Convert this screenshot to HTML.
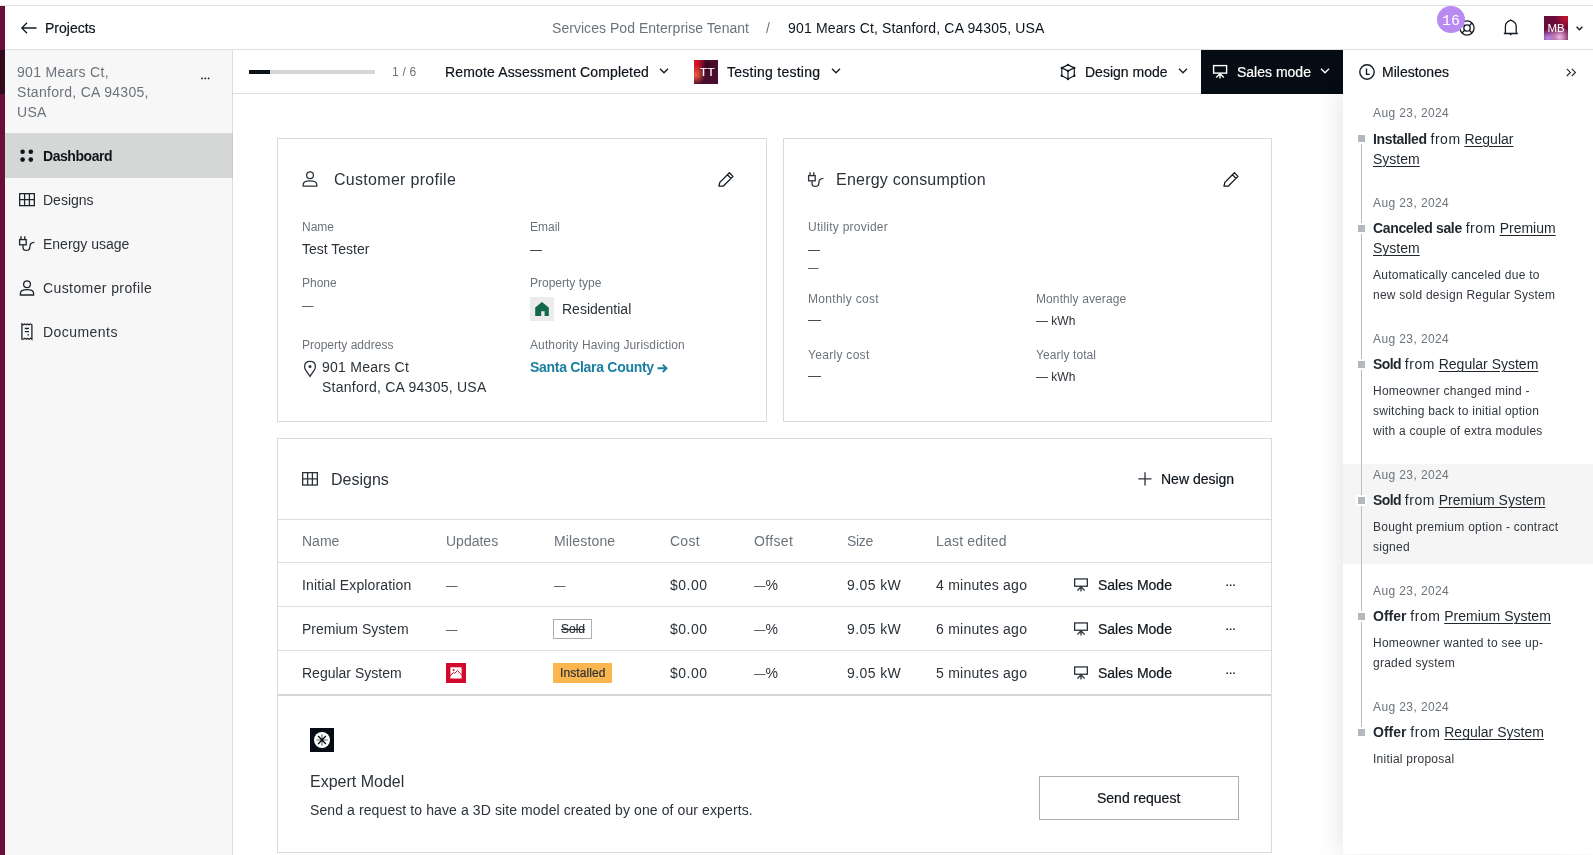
<!DOCTYPE html>
<html><head><meta charset="utf-8">
<style>
*{box-sizing:border-box;margin:0;padding:0}
html,body{width:1593px;height:855px;overflow:hidden;background:#fff}
body{font-family:"Liberation Sans",sans-serif;color:#141b22;position:relative;will-change:transform}
.a{position:absolute;white-space:nowrap}
.t14{font-size:14px;line-height:20px}
.t16{font-size:16px;line-height:22px}
.t12{font-size:12px;line-height:16px}
.g{color:#6c737b}
.d{color:#0d141b}
.b{color:#2b3239}
.m{-webkit-text-stroke:0.2px currentColor}
.bd{font-weight:bold}
svg{position:absolute;overflow:visible}
.ln{position:absolute;background:#dcdddf}
u{text-decoration:underline;text-underline-offset:2px;text-decoration-thickness:1px}
.a b{font-weight:bold;letter-spacing:-0.45px}
</style></head><body>
<!-- top line -->
<div class="ln" style="left:0;top:5px;width:1593px;height:1px;background:#e1e2e3"></div>
<!-- left strip -->
<div class="a" style="left:0;top:6px;width:5px;height:849px;background:#6a0e3b"></div>
<div class="a" style="left:0;top:50px;width:5px;height:44px;background:#340a1d"></div>

<!-- ============ HEADER ============ -->
<div class="ln" style="left:5px;top:49px;width:1588px;height:1px"></div>
<svg style="left:21px;top:22px" width="16" height="12" viewBox="0 0 16 12"><path d="M6 0.8 L0.8 6 L6 11.2 M0.8 6 H15.5" fill="none" stroke="#141b22" stroke-width="1.3"/></svg>
<div class="a t14 d m" style="left:45px;top:18px">Projects</div>
<div class="a t14 g" style="left:552px;top:18px;letter-spacing:0.04px">Services Pod Enterprise Tenant</div>
<div class="a t14 g" style="left:766px;top:18px">/</div>
<div class="a t14 d" style="left:788px;top:18px;letter-spacing:0.16px">901 Mears Ct, Stanford, CA 94305, USA</div>
<!-- right icons -->
<svg style="left:1459px;top:20px" width="16" height="16" viewBox="0 0 16 16"><g fill="none" stroke="#141b22" stroke-width="1.3"><circle cx="8" cy="8" r="7.1"/><circle cx="8" cy="8" r="3.2"/><path d="M3 3 L5.7 5.7 M13 3 L10.3 5.7 M3 13 L5.7 10.3 M13 13 L10.3 10.3"/></g></svg>
<div class="a" style="left:1437px;top:6px;width:28px;height:27px;border-radius:50%;background:#b98bf1"></div>
<div class="a" style="left:1441px;top:12.5px;width:20px;font-family:'Liberation Mono',monospace;font-size:15px;line-height:18px;color:#fff;text-align:center">16</div>
<svg style="left:1503px;top:19px" width="16" height="17" viewBox="0 0 16 17"><path d="M2.4 14.3 V7.2 Q2.4 3.2 7.7 1.2 Q13.2 3.2 13.2 7.2 V14.3 M0.8 14.5 H14.8" fill="none" stroke="#141b22" stroke-width="1.3" stroke-linejoin="round"/><path d="M6.4 15 H9 L7.7 16.6 Z M6.9 1.6 L7.7 0.4 L8.5 1.6 Z" fill="#141b22"/></svg>
<div class="a" style="left:1544px;top:16px;width:24px;height:24px;background:radial-gradient(ellipse 12px 11px at 65% 88%,#f6bdf0 0%,rgba(246,189,240,0) 100%),radial-gradient(ellipse 10px 9px at 15% 92%,#b48cf4 0%,rgba(180,140,244,0) 100%),radial-gradient(ellipse 11px 11px at 90% 8%,#c2122c 0%,rgba(194,18,44,0) 100%),#680d3a"></div>
<div class="a" style="left:1544px;top:21px;width:24px;text-align:center;color:#fff;font-size:11.5px;line-height:14px">MB</div>
<svg style="left:1576px;top:26px" width="7" height="5" viewBox="0 0 7 5"><path d="M0.6 0.8 L3.5 3.7 L6.4 0.8" fill="none" stroke="#141b22" stroke-width="1.4"/></svg>

<!-- ============ SIDEBAR ============ -->
<div class="a" style="left:5px;top:50px;width:227px;height:805px;background:#f7f7f7"></div>
<div class="ln" style="left:232px;top:50px;width:1px;height:805px"></div>
<div class="a t14 g" style="left:17px;top:62px;line-height:20px;letter-spacing:0.3px">901 Mears Ct,<br>Stanford, CA 94305,<br>USA</div>
<svg style="left:201px;top:77px" width="9" height="3" viewBox="0 0 9 3"><g fill="#141b22"><circle cx="1" cy="1.4" r="0.9"/><circle cx="4.3" cy="1.4" r="0.9"/><circle cx="7.6" cy="1.4" r="0.9"/></g></svg>
<div class="a" style="left:5px;top:133px;width:227px;height:45px;background:#d5d6d6"></div>
<div class="a" style="left:232px;top:133px;width:1px;height:45px;background:#c6c8ca"></div>
<svg style="left:20px;top:149px" width="14" height="14" viewBox="0 0 14 14"><g fill="#0d141b"><circle cx="2.6" cy="2.8" r="2.3"/><circle cx="10.8" cy="2.8" r="2.3"/><circle cx="2.6" cy="10.6" r="2.3"/><circle cx="10.8" cy="10.6" r="2.3"/></g></svg>
<div class="a t14 d bd" style="left:43px;top:146px;letter-spacing:-0.45px">Dashboard</div>
<svg style="left:19px;top:193px" width="16" height="14" viewBox="0 0 16 14"><g fill="none" stroke="#1d242b" stroke-width="1.3"><rect x="0.65" y="0.65" width="14.7" height="12"/><path d="M5.6 0.65 V12.65 M10.4 0.65 V12.65 M0.65 6.6 H15.35"/></g></svg>
<div class="a t14 b" style="left:43px;top:190px">Designs</div>
<svg style="left:17px;top:234px" width="20" height="20" viewBox="0 0 20 20"><g fill="none" stroke="#1d242b" stroke-width="1.3"><path d="M4 2.2 V5.4 M7.8 2.2 V5.4"/><rect x="2.6" y="5.6" width="6.6" height="5.2"/><path d="M6 11 V13.2 Q6 16.4 9.3 16.4 Q12.9 16.4 12.9 12.4 Q12.9 8.6 17.4 8.4"/></g></svg>
<div class="a t14 b" style="left:43px;top:234px">Energy usage</div>
<svg style="left:19px;top:280px" width="16" height="16" viewBox="0 0 16 16"><g fill="none" stroke="#1d242b" stroke-width="1.3"><circle cx="8" cy="4.2" r="3.4"/><path d="M1.4 15 V13.2 Q1.4 9.6 8 9.6 Q14.6 9.6 14.6 13.2 V15 Z"/></g></svg>
<div class="a t14 b" style="left:43px;top:278px;letter-spacing:0.4px">Customer profile</div>
<svg style="left:21px;top:323px" width="12" height="17" viewBox="0 0 12 17"><g fill="none" stroke="#1d242b" stroke-width="1.3"><path d="M0.9 16.2 V0.9 L2.3 1.8 L3.7 0.9 L5.1 1.8 L6.5 0.9 L7.9 1.8 L9.3 0.9 L10.9 1.8 V16.2 L9.5 15.3 L8.1 16.2 L6.7 15.3 L5.3 16.2 L3.9 15.3 L2.5 16.2 Z"/><path d="M3.8 5.5 H8 M3.8 8.7 H8 M6.5 11.9 H8"/></g></svg>
<div class="a t14 b" style="left:43px;top:322px;letter-spacing:0.45px">Documents</div>

<!-- ============ TOOLBAR ============ -->
<div class="ln" style="left:233px;top:93px;width:1110px;height:1px"></div>
<div class="a" style="left:249px;top:70px;width:126px;height:4px;background:#d5d6d7"></div>
<div class="a" style="left:249px;top:70px;width:21px;height:4px;background:#0b1219"></div>
<div class="a t12 g" style="left:392px;top:64px;letter-spacing:0.2px">1 / 6</div>
<div class="a t14 d m" style="left:445px;top:62px;letter-spacing:0.15px">Remote Assessment Completed</div>
<svg style="left:659px;top:68px" width="10" height="6" viewBox="0 0 10 6"><path d="M1 0.8 L5 4.8 L9 0.8" fill="none" stroke="#141b22" stroke-width="1.3"/></svg>
<div class="a" style="left:694px;top:60px;width:24px;height:24px;background:radial-gradient(ellipse 9px 10px at 2px 15px,#f2603f 0%,rgba(242,96,63,0) 100%),radial-gradient(ellipse 12px 16px at 0px 4px,#f01020 0%,#c0102a 40%,rgba(160,16,40,0) 100%),radial-gradient(ellipse 10px 8px at 12px 6px,#35051c 0%,rgba(53,5,28,0) 100%),#4b0d2f"></div>
<div class="a m" style="left:695.5px;top:65px;width:24px;text-align:center;color:#fff;font-size:11.5px;line-height:14px;letter-spacing:0.6px">TT</div>
<div class="a t14 d m" style="left:727px;top:62px;letter-spacing:0.25px">Testing testing</div>
<svg style="left:831px;top:68px" width="10" height="6" viewBox="0 0 10 6"><path d="M1 0.8 L5 4.8 L9 0.8" fill="none" stroke="#141b22" stroke-width="1.3"/></svg>
<svg style="left:1060px;top:64px" width="16" height="16" viewBox="0 0 16 16"><g fill="none" stroke="#141b22" stroke-width="1.2" stroke-linejoin="round"><path d="M8 0.9 L14.3 3.9 V11.8 L8 15 L1.8 11.8 V3.9 Z M1.8 3.9 L8 6.9 L14.3 3.9 M8 6.9 V15"/></g><g fill="#141b22"><circle cx="8" cy="0.9" r="1.2"/><circle cx="1.8" cy="3.9" r="1.2"/><circle cx="14.3" cy="3.9" r="1.2"/><circle cx="1.8" cy="11.8" r="1.2"/><circle cx="14.3" cy="11.8" r="1.2"/><circle cx="8" cy="15" r="1.2"/><circle cx="8" cy="6.9" r="1.2"/></g></svg>
<div class="a t14 d m" style="left:1085px;top:62px">Design mode</div>
<svg style="left:1178px;top:68px" width="10" height="6" viewBox="0 0 10 6"><path d="M1 0.8 L5 4.8 L9 0.8" fill="none" stroke="#141b22" stroke-width="1.3"/></svg>
<div class="a" style="left:1201px;top:50px;width:142px;height:44px;background:#060c14"></div>
<svg style="left:1212px;top:64px" width="16" height="15" viewBox="0 0 16 15"><g fill="none" stroke="#fff" stroke-width="1.4"><rect x="1.6" y="1.6" width="13" height="7.5"/><path d="M4.2 13.6 L8 9.8 L11.8 13.6 M8 10 V14.5"/></g></svg>
<div class="a t14 m" style="left:1237px;top:62px;color:#fff">Sales mode</div>
<svg style="left:1320px;top:68px" width="10" height="6" viewBox="0 0 10 6"><path d="M1 0.8 L5 4.8 L9 0.8" fill="none" stroke="#fff" stroke-width="1.3"/></svg>

<!-- ============ MAIN CARDS ============ -->
<div class="a" style="left:277px;top:138px;width:490px;height:284px;border:1px solid #d9dadc"></div>
<div class="a" style="left:783px;top:138px;width:489px;height:284px;border:1px solid #d9dadc"></div>
<div class="a" style="left:277px;top:438px;width:995px;height:415px;border:1px solid #d9dadc"></div>

<!-- Customer profile -->
<svg style="left:302px;top:171px" width="16" height="16" viewBox="0 0 16 16"><g fill="none" stroke="#2b3239" stroke-width="1.3"><circle cx="8" cy="4.2" r="3.4"/><path d="M1.2 15.2 V13.4 Q1.2 9.8 8 9.8 Q14.8 9.8 14.8 13.4 V15.2 Z"/></g></svg>
<div class="a t16 b" style="left:334px;top:168.5px;letter-spacing:0.3px">Customer profile</div>
<svg style="left:717px;top:171px" width="18" height="18" viewBox="0 0 18 18"><path d="M2 15.2 L2.8 11.4 L12.4 1.8 L16 5.4 L6.4 15 Z M10.4 3.8 L14 7.4" fill="none" stroke="#141b22" stroke-width="1.3" stroke-linejoin="round"/></svg>
<div class="a t12 g" style="left:302px;top:219px">Name</div>
<div class="a t14 b" style="left:302px;top:239px">Test Tester</div>
<div class="a t12 g" style="left:302px;top:275px">Phone</div>
<div class="a t14 b" style="left:302px;top:295px"><span style="font-size:11.5px;position:relative;top:-0.8px">—</span></div>
<div class="a t12 g" style="left:302px;top:337px">Property address</div>
<svg style="left:303px;top:360px" width="14" height="18" viewBox="0 0 14 18"><g fill="none" stroke="#2b3239" stroke-width="1.3"><path d="M7 16.4 L2.4 9.6 Q1.6 8.2 1.6 6.6 Q1.6 1.4 7 1.4 Q12.4 1.4 12.4 6.6 Q12.4 8.2 11.6 9.6 Z"/></g><circle cx="7" cy="6.6" r="1.5" fill="#2b3239"/></svg>
<div class="a t14 b" style="left:322px;top:357px;letter-spacing:0.25px">901 Mears Ct<br>Stanford, CA 94305, USA</div>
<div class="a t12 g" style="left:530px;top:219px">Email</div>
<div class="a t14 b" style="left:530px;top:239px"><span style="font-size:12px">—</span></div>
<div class="a t12 g" style="left:530px;top:275px">Property type</div>
<div class="a" style="left:530px;top:297px;width:24px;height:24px;background:#ececec"></div>
<svg style="left:534px;top:301px" width="16" height="16" viewBox="0 0 16 16"><path d="M1.2 6.6 L7.9 1 L14.8 6.6 V15 H10.6 V10.2 H7.2 V15 H1.2 Z" fill="#13674c"/></svg>
<div class="a t14 b" style="left:562px;top:299px">Residential</div>
<div class="a t12 g" style="left:530px;top:337px;letter-spacing:0.12px">Authority Having Jurisdiction</div>
<div class="a t14 bd" style="left:530px;top:357px;color:#1a7fa0;letter-spacing:-0.3px">Santa Clara County</div>
<svg style="left:657px;top:364px" width="11" height="9" viewBox="0 0 11 9"><path d="M0.5 4.3 H9.5 M5.8 0.6 L9.5 4.3 L5.8 8" fill="none" stroke="#1a7fa0" stroke-width="1.9"/></svg>

<!-- Energy consumption -->
<svg style="left:806px;top:170px" width="20" height="20" viewBox="0 0 20 20"><g fill="none" stroke="#2b3239" stroke-width="1.3"><path d="M4 2.2 V5.4 M7.8 2.2 V5.4"/><rect x="2.6" y="5.6" width="6.6" height="5.2"/><path d="M6 11 V13.2 Q6 16.4 9.3 16.4 Q12.9 16.4 12.9 12.4 Q12.9 8.6 17.4 8.4"/></g></svg>
<div class="a t16 b" style="left:836px;top:168.8px;letter-spacing:0.22px">Energy consumption</div>
<svg style="left:1222px;top:171px" width="18" height="18" viewBox="0 0 18 18"><path d="M2 15.2 L2.8 11.4 L12.4 1.8 L16 5.4 L6.4 15 Z M10.4 3.8 L14 7.4" fill="none" stroke="#141b22" stroke-width="1.3" stroke-linejoin="round"/></svg>
<div class="a t12 g" style="left:808px;top:219px;letter-spacing:0.25px">Utility provider</div>
<div class="a t14 b" style="left:808px;top:239px"><span style="font-size:12px">—</span></div>
<div class="a t12 b" style="left:808px;top:259px"><span style="font-size:10.5px">—</span></div>
<div class="a t12 g" style="left:808px;top:291px;letter-spacing:0.3px">Monthly cost</div>
<div class="a t14 b" style="left:808px;top:309px"><span style="font-size:13px">—</span></div>
<div class="a t12 g" style="left:1036px;top:291px;letter-spacing:0.1px">Monthly average</div>
<div class="a t12 b" style="left:1036px;top:313px">— kWh</div>
<div class="a t12 g" style="left:808px;top:347px;letter-spacing:0.3px">Yearly cost</div>
<div class="a t14 b" style="left:808px;top:365px"><span style="font-size:13px">—</span></div>
<div class="a t12 g" style="left:1036px;top:347px;letter-spacing:0.1px">Yearly total</div>
<div class="a t12 b" style="left:1036px;top:369px">— kWh</div>

<!-- Designs -->
<svg style="left:302px;top:472px" width="16" height="14" viewBox="0 0 16 14"><g fill="none" stroke="#2b3239" stroke-width="1.3"><rect x="0.65" y="0.65" width="14.7" height="12.4"/><path d="M5.6 0.65 V13 M10.4 0.65 V13 M0.65 6.8 H15.35"/></g></svg>
<div class="a t16 b" style="left:331px;top:468.5px" id="dz">Designs</div>
<svg style="left:1138px;top:472px" width="14" height="14" viewBox="0 0 14 14"><path d="M7 0.3 V13.5 M0.3 6.9 H13.5" fill="none" stroke="#2b3239" stroke-width="1.3"/></svg>
<div class="a t14 d m" style="left:1161px;top:469px">New design</div>

<div class="ln" style="left:278px;top:519px;width:993px;height:1px"></div>
<div class="ln" style="left:278px;top:562px;width:993px;height:1px"></div>
<div class="ln" style="left:278px;top:606px;width:993px;height:1px"></div>
<div class="ln" style="left:278px;top:650px;width:993px;height:1px"></div>
<div class="ln" style="left:278px;top:694px;width:993px;height:2px;background:#d5d6d8"></div>

<!-- table header -->
<div class="a t14 g" style="left:302px;top:531px">Name</div>
<div class="a t14 g" style="left:446px;top:531px">Updates</div>
<div class="a t14 g" style="left:554px;top:531px;letter-spacing:0.15px">Milestone</div>
<div class="a t14 g" style="left:670px;top:531px;letter-spacing:0.25px">Cost</div>
<div class="a t14 g" style="left:754px;top:531px;letter-spacing:0.35px">Offset</div>
<div class="a t14 g" style="left:847px;top:531px;letter-spacing:-0.3px">Size</div>
<div class="a t14 g" style="left:936px;top:531px;letter-spacing:0.2px">Last edited</div>

<!-- rows -->
<div class="a t14 b" style="left:302px;top:575px;letter-spacing:0.15px">Initial Exploration</div>
<div class="a t14 b" style="left:446px;top:575px"><span style="font-size:11.5px;position:relative;top:-0.8px">—</span></div>
<div class="a t14 b" style="left:554px;top:575px"><span style="font-size:11.5px;position:relative;top:-0.8px">—</span></div>
<div class="a t14 b" style="left:670px;top:575px;letter-spacing:0.5px">$0.00</div>
<div class="a t14 b" style="left:754px;top:575px"><span style="font-size:11.5px;position:relative;top:-0.8px">—</span>%</div>
<div class="a t14 b" style="left:847px;top:575px;letter-spacing:0.4px">9.05 kW</div>
<div class="a t14 b" style="left:936px;top:575px;letter-spacing:0.25px">4 minutes ago</div>

<div class="a t14 b" style="left:302px;top:619px">Premium System</div>
<div class="a t14 b" style="left:446px;top:619px"><span style="font-size:11.5px;position:relative;top:-0.8px">—</span></div>
<div class="a" style="left:553px;top:619px;width:39px;height:20px;border:1px solid #a9aeb3"></div>
<div class="a t12 b m" style="left:561px;top:620.5px;text-decoration:line-through">Sold</div>
<div class="a t14 b" style="left:670px;top:619px;letter-spacing:0.5px">$0.00</div>
<div class="a t14 b" style="left:754px;top:619px"><span style="font-size:11.5px;position:relative;top:-0.8px">—</span>%</div>
<div class="a t14 b" style="left:847px;top:619px;letter-spacing:0.4px">9.05 kW</div>
<div class="a t14 b" style="left:936px;top:619px;letter-spacing:0.25px">6 minutes ago</div>

<div class="a t14 b" style="left:302px;top:663px">Regular System</div>
<div class="a" style="left:446px;top:663px;width:20px;height:20px;background:#d2082d"></div>
<svg style="left:450px;top:667px" width="12" height="12" viewBox="0 0 12 12"><path d="M0.4 0.3 H11.6 V11.5 H0.4 Z" fill="#fff"/><path d="M0 8.8 L3.6 5.6 L4.8 6.4 L7.4 3.6 L12 8.2" fill="none" stroke="#d2082d" stroke-width="1"/><circle cx="3.6" cy="3" r="1" fill="#d2082d"/></svg>
<div class="a" style="left:553px;top:663px;width:59px;height:20px;background:#fbb64f"></div>
<div class="a t12 b m" style="left:560px;top:664.5px;letter-spacing:0.1px">Installed</div>
<div class="a t14 b" style="left:670px;top:663px;letter-spacing:0.5px">$0.00</div>
<div class="a t14 b" style="left:754px;top:663px"><span style="font-size:11.5px;position:relative;top:-0.8px">—</span>%</div>
<div class="a t14 b" style="left:847px;top:663px;letter-spacing:0.4px">9.05 kW</div>
<div class="a t14 b" style="left:936px;top:663px;letter-spacing:0.25px">5 minutes ago</div>

<!-- sales mode column -->
<svg style="left:1073px;top:577px" width="16" height="15" viewBox="0 0 16 15"><g fill="none" stroke="#2b3239" stroke-width="1.3"><rect x="1.65" y="1.95" width="12.7" height="7.3"/><path d="M4.4 13.6 L8 9.8 L11.6 13.6 M8 10.2 V14.4"/></g></svg>
<div class="a t14 d m" style="left:1098px;top:575px">Sales Mode</div>
<svg style="left:1226px;top:584px" width="10" height="3" viewBox="0 0 10 3"><g fill="#2b3239"><circle cx="1.2" cy="1.2" r="0.9"/><circle cx="4.6" cy="1.2" r="0.9"/><circle cx="8" cy="1.2" r="0.9"/></g></svg>
<svg style="left:1073px;top:621px" width="16" height="15" viewBox="0 0 16 15"><g fill="none" stroke="#2b3239" stroke-width="1.3"><rect x="1.65" y="1.95" width="12.7" height="7.3"/><path d="M4.4 13.6 L8 9.8 L11.6 13.6 M8 10.2 V14.4"/></g></svg>
<div class="a t14 d m" style="left:1098px;top:619px">Sales Mode</div>
<svg style="left:1226px;top:628px" width="10" height="3" viewBox="0 0 10 3"><g fill="#2b3239"><circle cx="1.2" cy="1.2" r="0.9"/><circle cx="4.6" cy="1.2" r="0.9"/><circle cx="8" cy="1.2" r="0.9"/></g></svg>
<svg style="left:1073px;top:665px" width="16" height="15" viewBox="0 0 16 15"><g fill="none" stroke="#2b3239" stroke-width="1.3"><rect x="1.65" y="1.95" width="12.7" height="7.3"/><path d="M4.4 13.6 L8 9.8 L11.6 13.6 M8 10.2 V14.4"/></g></svg>
<div class="a t14 d m" style="left:1098px;top:663px">Sales Mode</div>
<svg style="left:1226px;top:672px" width="10" height="3" viewBox="0 0 10 3"><g fill="#2b3239"><circle cx="1.2" cy="1.2" r="0.9"/><circle cx="4.6" cy="1.2" r="0.9"/><circle cx="8" cy="1.2" r="0.9"/></g></svg>

<!-- Expert model -->
<div class="a" style="left:310px;top:728px;width:24px;height:24px;background:#060c14"></div>
<svg style="left:314px;top:732px" width="16" height="16" viewBox="0 0 16 16"><circle cx="8" cy="8" r="8" fill="#fff"/><g stroke="#060c14"><path d="M8 2.3 V13.7 M2.3 8 H13.7" stroke-width="1.2" stroke-opacity="0.6"/><path d="M4.1 4.1 L11.9 11.9 M11.9 4.1 L4.1 11.9" stroke-width="1.35"/></g><circle cx="8" cy="8" r="1.4" fill="#060c14"/></svg>
<div class="a t16 b" style="left:310px;top:771px">Expert Model</div>
<div class="a t14 b" style="left:310px;top:800px;letter-spacing:0.1px">Send a request to have a 3D site model created by one of our experts.</div>
<div class="a" style="left:1039px;top:776px;width:200px;height:44px;border:1px solid #a9aeb3"></div>
<div class="a t14 d m" style="left:1097px;top:788px">Send request</div>

<!-- ============ MILESTONES PANEL ============ -->
<div class="a" style="left:1343px;top:94px;width:250px;height:760px;background:#fff;box-shadow:-6px 0 22px rgba(0,0,0,0.09)"></div>
<div class="a" style="left:1343px;top:50px;width:250px;height:44px;background:#fff"></div>
<svg style="left:1359px;top:64px" width="16" height="16" viewBox="0 0 16 16"><g fill="none" stroke="#141b22" stroke-width="1.4"><circle cx="8" cy="8" r="7.2"/><path d="M7.5 4.4 V10.4 H10.8"/></g></svg>
<div class="a t14 d m" style="left:1382px;top:62px">Milestones</div>
<svg style="left:1566px;top:67.5px" width="10" height="9" viewBox="0 0 10 9"><path d="M0.8 0.8 L4.4 4.4 L0.8 8 M5.8 0.8 L9.4 4.4 L5.8 8" fill="none" stroke="#262d34" stroke-width="1.2"/></svg>

<div class="a" style="left:1343px;top:464px;width:250px;height:100px;background:#f5f5f5"></div>
<div class="a" style="left:1361px;top:140px;width:1px;height:592px;background:#b9bdc1"></div>
<div class="a t12 g" style="left:1373px;top:104.9px;letter-spacing:0.4px">Aug 23, 2024</div>
<div class="a b" style="left:1373px;top:128.7px;font-size:14px;line-height:20px;color:#1f262d"><b style="letter-spacing:-0.35px">Installed</b> <span style="letter-spacing:0.5px">from</span> <u>Regular</u><br><u>System</u></div>
<div class="a" style="left:1356px;top:133px;width:11px;height:11px;background:#b3b8bc;border:2px solid #fff"></div>
<div class="a t12 g" style="left:1373px;top:195.3px;letter-spacing:0.4px">Aug 23, 2024</div>
<div class="a b" style="left:1373px;top:218.3px;font-size:14px;line-height:20px;color:#1f262d"><b style="letter-spacing:-0.35px">Canceled sale</b> <span style="letter-spacing:0.5px">from</span> <u>Premium</u><br><u>System</u></div>
<div class="a b" style="left:1373px;top:265.0px;font-size:12px;line-height:20px;letter-spacing:0.25px;color:#30373e">Automatically canceled due to<br>new sold design Regular System</div>
<div class="a" style="left:1356px;top:223px;width:11px;height:11px;background:#b3b8bc;border:2px solid #fff"></div>
<div class="a t12 g" style="left:1373px;top:330.9px;letter-spacing:0.4px">Aug 23, 2024</div>
<div class="a b" style="left:1373px;top:354.3px;font-size:14px;line-height:20px;color:#1f262d"><b style="letter-spacing:-0.6px">Sold</b> <span style="letter-spacing:0.5px">from</span> <u>Regular System</u></div>
<div class="a b" style="left:1373px;top:381.0px;font-size:12px;line-height:20px;letter-spacing:0.25px;color:#30373e">Homeowner changed mind -<br>switching back to initial option<br>with a couple of extra modules</div>
<div class="a" style="left:1356px;top:359px;width:11px;height:11px;background:#b3b8bc;border:2px solid #fff"></div>
<div class="a t12 g" style="left:1373px;top:467.3px;letter-spacing:0.4px">Aug 23, 2024</div>
<div class="a b" style="left:1373px;top:490.3px;font-size:14px;line-height:20px;color:#1f262d"><b style="letter-spacing:-0.6px">Sold</b> <span style="letter-spacing:0.5px">from</span> <u>Premium System</u></div>
<div class="a b" style="left:1373px;top:517.1px;font-size:12px;line-height:20px;letter-spacing:0.25px;color:#30373e">Bought premium option - contract<br>signed</div>
<div class="a" style="left:1356px;top:495px;width:11px;height:11px;background:#b3b8bc;border:2px solid #fff"></div>
<div class="a t12 g" style="left:1373px;top:583.3px;letter-spacing:0.4px">Aug 23, 2024</div>
<div class="a b" style="left:1373px;top:606.4px;font-size:14px;line-height:20px;color:#1f262d"><b style="letter-spacing:0px">Offer</b> <span style="letter-spacing:0.5px">from</span> <u>Premium System</u></div>
<div class="a b" style="left:1373px;top:633.1px;font-size:12px;line-height:20px;letter-spacing:0.25px;color:#30373e">Homeowner wanted to see up-<br>graded system</div>
<div class="a" style="left:1356px;top:611px;width:11px;height:11px;background:#b3b8bc;border:2px solid #fff"></div>
<div class="a t12 g" style="left:1373px;top:699.3px;letter-spacing:0.4px">Aug 23, 2024</div>
<div class="a b" style="left:1373px;top:722.4px;font-size:14px;line-height:20px;color:#1f262d"><b style="letter-spacing:0px">Offer</b> <span style="letter-spacing:0.5px">from</span> <u>Regular System</u></div>
<div class="a b" style="left:1373px;top:749.1px;font-size:12px;line-height:20px;letter-spacing:0.25px;color:#30373e">Initial proposal</div>
<div class="a" style="left:1356px;top:727px;width:11px;height:11px;background:#b3b8bc;border:2px solid #fff"></div>
</body></html>
